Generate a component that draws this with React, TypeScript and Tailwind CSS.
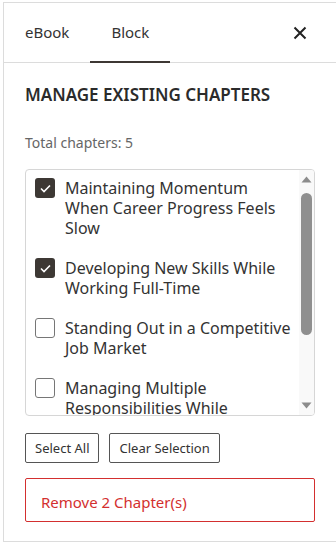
import { useState } from 'react';

const chapters = [
  'Maintaining Momentum When Career Progress Feels Slow',
  'Developing New Skills While Working Full-Time',
  'Standing Out in a Competitive Job Market',
  'Managing Multiple Responsibilities While Studying',
  'Building a Professional Network From Scratch',
];

export default function App() {
  const [selected, setSelected] = useState<number[]>([0, 1]);

  const toggle = (i: number) => {
    setSelected((prev) => (prev.includes(i) ? prev.filter((x) => x !== i) : [...prev, i]));
  };

  return (
    <div className="w-[336px] h-[544px] bg-white pl-[3px] pt-[2px] font-['Noto_Sans',sans-serif] text-[#333]">
      <div className="h-[540px] border-l border-t border-b border-[#dcdcdc] flex flex-col">
        {/* Tabs */}
        <div className="h-[60px] border-b border-[#dcdcdc] flex items-stretch">
          <button className="px-[21px] text-[15px] text-[#333] relative">eBook</button>
          <button className="px-[21px] text-[15px] text-[#333] relative">
            Block
            <span className="absolute left-0 right-0 -bottom-px h-[2px] bg-[#3d3834]" />
          </button>
          <div className="flex-1" />
          <button className="w-[44px] mr-[14px] flex items-center justify-center" aria-label="Close">
            <svg width="14" height="14" viewBox="0 0 14 14" fill="none" stroke="#222" strokeWidth="2">
              <path d="M1.5 1.5 L12.5 12.5 M12.5 1.5 L1.5 12.5" />
            </svg>
          </button>
        </div>

        <div className="px-[21px]">
          <h2 className="mt-5 text-[17px] leading-6 font-semibold text-[#2b2b2b]">MANAGE EXISTING CHAPTERS</h2>
          <p className="mt-[26px] text-[14px] leading-5 text-[#666]">{`Total chapters: ${chapters.length}`}</p>

          <div className="mt-4 h-[247px] border border-[#d6d6d6] rounded-[4px] flex overflow-hidden">
            <div className="flex-1 overflow-hidden pl-[9px] pr-[8px] pt-[8px]">
              <ul className="flex flex-col gap-5">
                {chapters.map((c, i) => {
                  const checked = selected.includes(i);
                  return (
                    <li key={c} className="flex items-start gap-[10px] cursor-pointer" onClick={() => toggle(i)}>
                      {checked ? (
                        <span className="w-5 h-5 shrink-0 rounded-[3px] bg-[#3d3834] flex items-center justify-center">
                          <svg width="11" height="9" viewBox="0 0 11 9" fill="none" stroke="#fff" strokeWidth="1.6">
                            <path d="M1 4.5 L4 7.5 L10 1.5" />
                          </svg>
                        </span>
                      ) : (
                        <span className="w-5 h-5 shrink-0 rounded-[3px] border border-[#767676] bg-white" />
                      )}
                      <span className="text-[16px] leading-5 text-[#333]">{c}</span>
                    </li>
                  );
                })}
              </ul>
            </div>
            {/* scrollbar */}
            <div className="w-[15px] shrink-0 bg-[#f9f9f9] flex flex-col items-center">
              <svg className="mt-[6px]" width="11" height="7" viewBox="0 0 11 7">
                <path d="M5.5 0.5 L10.5 6.5 L0.5 6.5 Z" fill="#8c8c8c" />
              </svg>
              <div className="mt-[10px] w-[11px] h-[142px] rounded-full bg-[#8f8f8f]" />
              <div className="flex-1" />
              <svg className="mb-[6px]" width="11" height="7" viewBox="0 0 11 7">
                <path d="M0.5 0.5 L10.5 0.5 L5.5 6.5 Z" fill="#8c8c8c" />
              </svg>
            </div>
          </div>

          <div className="mt-[17px] flex gap-[10px]">
            <button className="h-[30px] px-[9px] border border-[#555] rounded-[2px] text-[13px] leading-5 text-[#333]">Select All</button>
            <button className="h-[30px] px-[9px] border border-[#555] rounded-[2px] text-[13px] leading-5 text-[#333]">Clear Selection</button>
          </div>

          <button className="mt-[15px] w-full h-[44px] border-[1.5px] border-[#d32f2f] rounded-[2px] flex items-center pl-[15px] pt-[4px] text-[#d32f2f]">
            <span className="text-[15px] leading-5">{`Remove ${selected.length} Chapter(s)`}</span>
          </button>
        </div>
      </div>
    </div>
  );
}
